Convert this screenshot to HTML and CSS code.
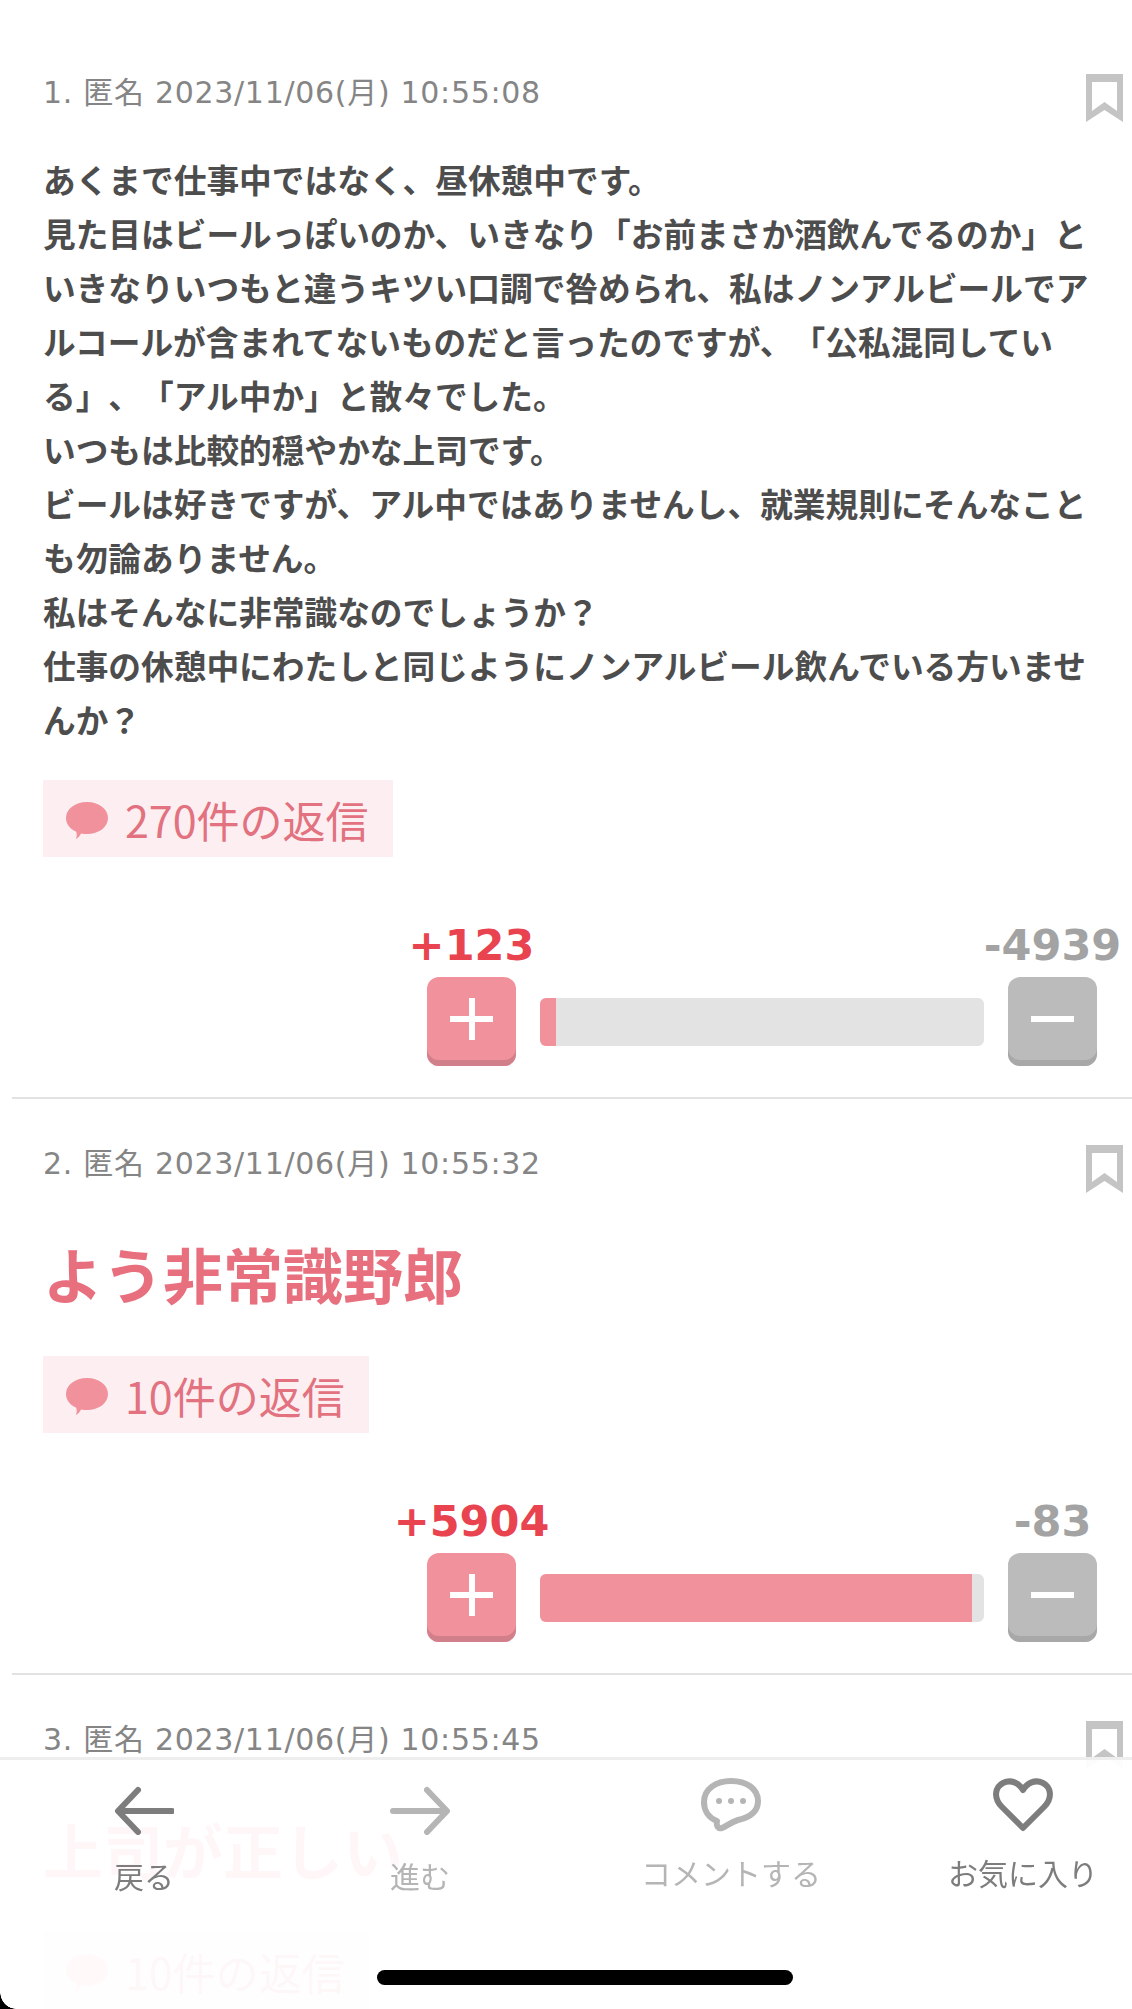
FILE: index.html
```html
<!DOCTYPE html>
<html lang="ja">
<head>
  <meta charset="UTF-8">
  <meta name="viewport" content="width=device-width, initial-scale=1.0">
  <title>コメント</title>
  <link rel="stylesheet" href="styles.css">
</head>
<body>
<main id="comments">

  <article class="post">
    <div class="post-head">
      <span class="meta">1. 匿名 2023/11/06(月) 10:55:08</span>
      <svg class="bookmark" viewBox="0 0 37 48"><path fill-rule="evenodd" d="M0 0H37V48L18.5 36L0 48ZM6 8V37L18.5 28L31 37V8Z"/></svg>
    </div>
    <p class="body">あくまで仕事中ではなく、昼休憩中です。<br>見た目はビールっぽいのか、いきなり「お前まさか酒飲んでるのか」といきなりいつもと違うキツい口調で咎められ、私はノンアルビールでアルコールが含まれてないものだと言ったのですが、「公私混同している」、「アル中か」と散々でした。<br>いつもは比較的穏やかな上司です。<br>ビールは好きですが、アル中ではありませんし、就業規則にそんなことも勿論ありません。<br>私はそんなに非常識なのでしょうか？<br>仕事の休憩中にわたしと同じようにノンアルビール飲んでいる方いませんか？</p>
    <a class="replies" href="#">
      <svg class="bubble" viewBox="0 0 42 37"><path d="M21 0C33 0 42 7 42 16C42 25 33 32 21 32C19 32 17 32 15 31.5C14 34 12 36 10 37C11 34 11 31 10 29.5C4 27 0 22 0 16C0 7 9 0 21 0Z"/></svg>
      270件の返信
    </a>
    <div class="vote">
      <div class="vote-side plus">
        <span class="score">+123</span>
        <button class="vote-btn"><span class="sign-h"></span><span class="sign-v"></span></button>
      </div>
      <div class="bar"><div class="bar-fill" style="width:3.6%"></div></div>
      <div class="vote-side minus">
        <span class="score">-4939</span>
        <button class="vote-btn"><span class="sign-h"></span></button>
      </div>
    </div>
  </article>

  <article class="post">
    <div class="post-head">
      <span class="meta">2. 匿名 2023/11/06(月) 10:55:32</span>
      <svg class="bookmark" viewBox="0 0 37 48"><path fill-rule="evenodd" d="M0 0H37V48L18.5 36L0 48ZM6 8V37L18.5 28L31 37V8Z"/></svg>
    </div>
    <p class="body big">よう非常識野郎</p>
    <a class="replies" href="#">
      <svg class="bubble" viewBox="0 0 42 37"><path d="M21 0C33 0 42 7 42 16C42 25 33 32 21 32C19 32 17 32 15 31.5C14 34 12 36 10 37C11 34 11 31 10 29.5C4 27 0 22 0 16C0 7 9 0 21 0Z"/></svg>
      10件の返信
    </a>
    <div class="vote">
      <div class="vote-side plus">
        <span class="score">+5904</span>
        <button class="vote-btn"><span class="sign-h"></span><span class="sign-v"></span></button>
      </div>
      <div class="bar"><div class="bar-fill" style="width:97.4%"></div></div>
      <div class="vote-side minus">
        <span class="score">-83</span>
        <button class="vote-btn"><span class="sign-h"></span></button>
      </div>
    </div>
  </article>

  <article class="post">
    <div class="post-head">
      <span class="meta">3. 匿名 2023/11/06(月) 10:55:45</span>
      <svg class="bookmark" viewBox="0 0 37 48"><path fill-rule="evenodd" d="M0 0H37V48L18.5 36L0 48ZM6 8V37L18.5 28L31 37V8Z"/></svg>
    </div>
    <p class="body big">上司が正しい</p>
    <a class="replies" href="#">
      <svg class="bubble" viewBox="0 0 42 37"><path d="M21 0C33 0 42 7 42 16C42 25 33 32 21 32C19 32 17 32 15 31.5C14 34 12 36 10 37C11 34 11 31 10 29.5C4 27 0 22 0 16C0 7 9 0 21 0Z"/></svg>
      10件の返信
    </a>
  </article>

</main>

<nav class="tabbar">
  <a class="tab arrow" href="#">
    <svg class="tab-icon" viewBox="0 0 60 50"><path d="M58 26H5M24 5L4 26L24 47"/></svg>
    <span>戻る</span>
  </a>
  <a class="tab arrow off" href="#">
    <svg class="tab-icon" viewBox="0 0 60 50"><path d="M3 26H56M37 5L57 26L37 47"/></svg>
    <span>進む</span>
  </a>
  <a class="tab off" href="#">
    <svg class="tab-icon" viewBox="0 0 60 54"><path d="M30 3C46 3 57 11 57 23C57 35 46 40 37 42C30 44 26 48 21 50C17 51 15 48 16 43C8 40 3 33 3 24C3 11 15 3 30 3Z"/><g class="dots"><circle cx="18" cy="23" r="3"/><circle cx="30" cy="23" r="3"/><circle cx="42" cy="23" r="3"/></g></svg>
    <span>コメントする</span>
  </a>
  <a class="tab fav" href="#">
    <svg class="tab-icon" viewBox="0 0 60 54"><path d="M30 50L9 29C0 20 2 9 10 5C18 1 26 5 30 12C34 5 42 1 50 5C58 9 60 20 51 29Z"/></svg>
    <span>お気に入り</span>
  </a>
  <div class="home-bar"></div>
</nav>
<div class="corner"></div>
</body>
</html>
```

FILE: styles.css
```css
:root{
  --pink:#f0919b;
  --pink-dark:#d27f8c;
  --pink-text:#e86f7d;
  --red:#e8434f;
  --grey-btn:#bbbbbb;
  --grey-dark:#a8a8a8;
  --text:#4d4d4d;
}
*{box-sizing:border-box;margin:0;padding:0;}
html,body{height:100%;overflow:hidden;background:#fff;}
body{font-family:"Noto Sans CJK JP","Noto Sans",sans-serif;color:var(--text);text-spacing-trim:space-all;}
a{text-decoration:none;}

#comments{padding-top:28px;}
.post{margin-left:12px;padding:0 0 31px 31px;border-bottom:2px solid #e2e2e2;}
.post-head{display:flex;justify-content:space-between;align-items:flex-start;height:124px;padding:46px 9px 0 0;}
.meta{font-family:"DejaVu Sans","Noto Sans CJK JP",sans-serif;font-size:30px;letter-spacing:.7px;line-height:38px;color:#858585;}
.bookmark{width:37px;height:48px;fill:#c4c4c4;flex:none;}
.body{font-size:32.7px;line-height:54px;font-weight:700;padding-right:30px;}
.body.big{font-size:60px;line-height:90px;padding:5px 0 4px;color:var(--pink-text);}

.replies{display:inline-flex;align-items:center;gap:17px;height:77px;margin-top:34px;padding:0 24px 0 23px;background:#fdeff1;color:#e2727f;font-size:43px;}
.bubble{width:42px;height:37px;fill:var(--pink);margin-top:4px;}

.vote{display:flex;align-items:flex-end;justify-content:flex-end;margin-top:63px;padding-right:35px;}
.vote-side{display:flex;flex-direction:column;align-items:center;width:89px;}
.score{font-family:"DejaVu Sans",sans-serif;font-size:43px;font-weight:700;line-height:50px;margin-bottom:7px;white-space:nowrap;}
.plus .score{color:var(--red);}
.minus .score{color:#a3a3a3;}
.vote-btn{position:relative;width:89px;height:89px;border:none;border-radius:12px;}
.plus .vote-btn{background:var(--pink);box-shadow:inset 0 -6px 0 var(--pink-dark);}
.minus .vote-btn{background:var(--grey-btn);box-shadow:inset 0 -6px 0 var(--grey-dark);}
.sign-h{position:absolute;left:23px;top:39px;width:43px;height:6px;background:#fff;}
.sign-v{position:absolute;left:42px;top:21px;width:6px;height:42px;background:#fff;}

.bar{width:444px;height:48px;margin:0 24px 20px 24px;background:#e3e3e3;border-radius:6px;overflow:hidden;}
.bar-fill{height:100%;background:var(--pink);}

.tabbar{position:fixed;left:0;right:0;bottom:0;height:252px;display:grid;grid-template-columns:288px 264px 358px 222px;align-items:start;padding-top:18px;background:rgba(255,255,255,.94);border-top:3px solid #eeeeee;}
.tab{display:flex;flex-direction:column;align-items:center;color:#7d7d7d;font-size:30px;line-height:38px;white-space:nowrap;}
.tab.arrow{padding-top:7px;}
.tab.fav{padding-left:4px;}
.tab.off{color:#b5b5b5;}
.tab-icon{width:60px;height:54px;margin-bottom:21px;fill:none;stroke:currentColor;stroke-width:6;stroke-linecap:round;stroke-linejoin:round;}
.arrow .tab-icon{height:50px;}
.dots circle{fill:currentColor;stroke:none;}
.home-bar{position:absolute;left:377px;bottom:24px;width:416px;height:15px;border-radius:8px;background:#000;}
.corner{position:fixed;left:0;bottom:0;width:16px;height:17px;background:radial-gradient(16px 17px at 100% 0,transparent 97%,#000 100%);}
```
